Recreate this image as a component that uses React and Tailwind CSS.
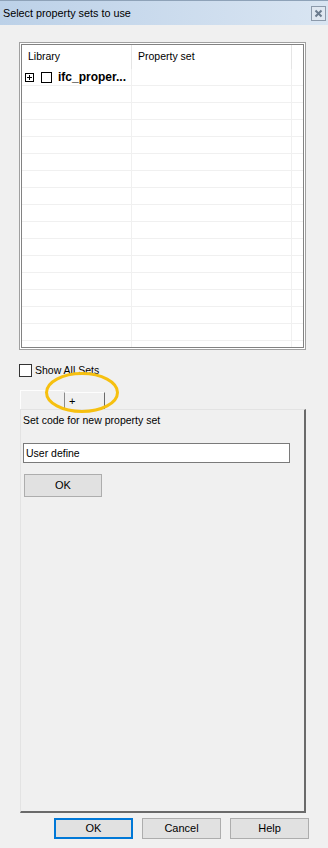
import { useState } from "react";

const FONT = { fontFamily: '"Liberation Sans", Arial, sans-serif' };

const GridRow = ({ first }) => (
  <div className="flex h-[17px] shrink-0 border-b border-[#f0f0f0]">
    <div className="flex w-[110px] shrink-0 items-center border-r border-[#f0f0f0]">
      {first && (
        <>
          <span className="ml-[3px] flex h-[9px] w-[9px] items-center justify-center border border-black">
            <svg width="7" height="7" viewBox="0 0 7 7">
              <path d="M1 3.5h5M3.5 1v5" stroke="#000" strokeWidth="1" />
            </svg>
          </span>
          <span className="ml-[7px] h-[11px] w-[11px] border border-black bg-white" />
          <span className="ml-[6px] whitespace-nowrap text-[12px] font-bold leading-none text-black">
            ifc_proper...
          </span>
        </>
      )}
    </div>
    <div className="w-[160px] shrink-0 border-r border-[#f0f0f0]" />
    <div className="flex-1" />
  </div>
);

const WinButton = ({ children, focused, className = "" }) => (
  <button
    className={`flex items-center justify-center bg-[#e1e1e1] text-[11px] text-black ${
      focused ? "border-2 border-[#0078d7]" : "border border-[#adadad]"
    } ${className}`}
  >
    {children}
  </button>
);

export default function App() {
  const [code, setCode] = useState("User define");
  const [showAll, setShowAll] = useState(false);

  return (
    <div
      className="relative flex h-[848px] w-[328px] flex-col overflow-hidden bg-[#f0f0f0] text-[10.5px] text-black"
      style={FONT}
    >
      {/* title bar */}
      <div className="flex h-[25px] shrink-0 items-center justify-between border-t border-[#8ea2b8] bg-gradient-to-r from-[#bcd1e8] to-[#d9e5f2] pl-[3px] pr-[2px]">
        <span className="text-[10.8px] text-black">Select property sets to use</span>
        <span className="flex h-[15px] w-[15px] items-center justify-center border border-[#8c9aab] bg-[#dfe7f1]">
          <svg width="9" height="9" viewBox="0 0 9 9">
            <path d="M1.5 1.5l6 6M7.5 1.5l-6 6" stroke="#6b7b8e" strokeWidth="2" />
          </svg>
        </span>
      </div>

      {/* property grid */}
      <div className="ml-[19px] mt-[17px] h-[308px] w-[287px] shrink-0 border border-[#a0a0a0] bg-white p-px">
        <div className="flex h-full flex-col overflow-hidden border border-[#828282] bg-white">
          <div className="flex h-[24px] shrink-0">
            <div className="flex w-[110px] shrink-0 items-center border-r border-[#e5e5e5] pl-[6px]">
              Library
            </div>
            <div className="flex w-[160px] shrink-0 items-center border-r border-[#e5e5e5] pl-[6px]">
              Property set
            </div>
            <div className="flex-1" />
          </div>
          {Array.from({ length: 17 }).map((_, i) => (
            <GridRow key={i} first={i === 0} />
          ))}
        </div>
      </div>

      {/* show all sets */}
      <label className="ml-[19px] mt-[14px] flex h-[13px] items-center gap-[3px]">
        <input
          type="checkbox"
          checked={showAll}
          onChange={(e) => setShowAll(e.target.checked)}
          className="h-[13px] w-[13px] appearance-none border border-[#333] bg-white"
        />
        <span className="leading-none">Show All Sets</span>
      </label>

      {/* tab strip */}
      <div className="ml-[20px] mt-[13px] flex h-[19px] items-end">
        <div className="h-[19px] w-[44px] border-l border-t border-[#fdfdfd]" />
        <div className="flex h-[17px] w-[41px] items-center border-l border-r border-t border-l-[#8a8a8a] border-r-[#696969] border-t-[#fdfdfd] pl-[4px] text-[11px]">
          +
        </div>
      </div>

      {/* tab panel */}
      <div className="ml-[20px] flex h-[404px] w-[286px] flex-col border-b-2 border-l border-r-2 border-t border-b-[#6a6a6a] border-l-[#e3e3e3] border-r-[#6a6a6a] border-t-[#e3e3e3] pl-[2px] pt-[4px]">
        <div className="leading-[13px]">Set code for new property set</div>
        <input
          value={code}
          onChange={(e) => setCode(e.target.value)}
          className="mt-[16px] h-[20px] w-[267px] border border-[#7a7a7a] bg-white px-[2px] text-[10.5px] text-black outline-none"
          style={FONT}
        />
        <WinButton className="ml-px mt-[11px] h-[23px] w-[78px]">OK</WinButton>
      </div>

      {/* dialog buttons */}
      <div className="ml-[54px] mt-[5px] flex gap-[9px]">
        <WinButton focused className="h-[21px] w-[79px]">OK</WinButton>
        <WinButton className="h-[21px] w-[79px]">Cancel</WinButton>
        <WinButton className="h-[21px] w-[79px]">Help</WinButton>
      </div>

      {/* yellow annotation ellipse */}
      <svg
        className="pointer-events-none absolute left-[44px] top-[371px]"
        width="76"
        height="43"
        viewBox="0 0 76 43"
      >
        <ellipse cx="38" cy="21.5" rx="35.5" ry="19" fill="none" stroke="#f6c010" strokeWidth="3" />
      </svg>
    </div>
  );
}
